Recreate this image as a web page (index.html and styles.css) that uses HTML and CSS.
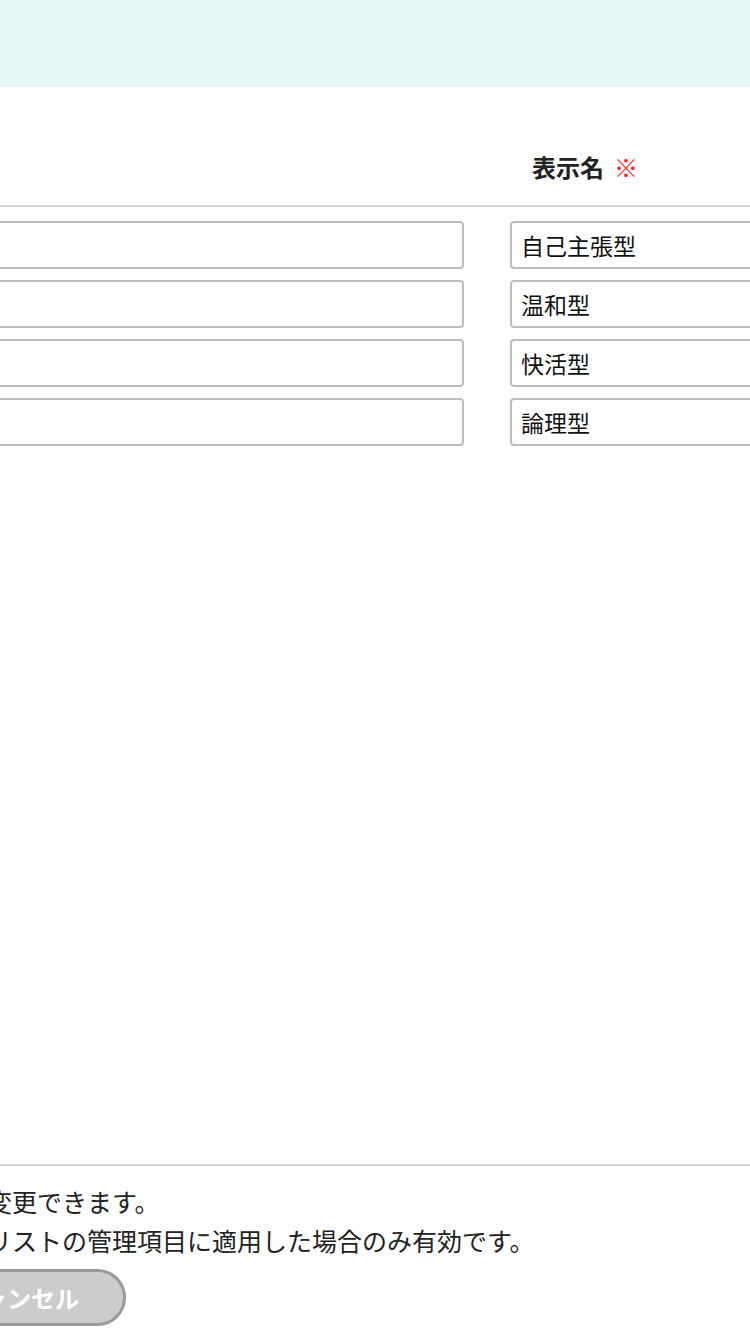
FILE: index.html
```html
<html>
  <head>
    <link rel="stylesheet" href="styles.css">
  </head>
  <body>
    <div class="page">
      <div class="band"></div>

      <div class="table">
        <div class="thead">
          <div class="th"></div>
          <div class="th th_name">表示名<span class="req">※</span></div>
        </div>
        <div class="tbody">
          <div class="tr">
            <input type="text" class="field" />
            <input type="text" class="field" value="自己主張型" />
          </div>
          <div class="tr">
            <input type="text" class="field" />
            <input type="text" class="field" value="温和型" />
          </div>
          <div class="tr">
            <input type="text" class="field" />
            <input type="text" class="field" value="快活型" />
          </div>
          <div class="tr">
            <input type="text" class="field" />
            <input type="text" class="field" value="論理型" />
          </div>
        </div>
      </div>

      <div class="foot">
        <p class="note">変更できます。</p>
        <p class="note">リストの管理項目に適用した場合のみ有効です。</p>
        <button type="button" class="btn_cancel">キャンセル</button>
      </div>
    </div>
  </body>
</html>
```

FILE: styles.css
```css
body {
  margin: 0;
  background-color: #ffffff;
  font-family: "Noto Sans CJK JP", "Noto Sans", sans-serif;
  color: #222222;
}
.page {
  width: 750px;
  height: 1335px;
  overflow: hidden;
}
.band {
  height: 87px;
  background-color: #e5f6f6;
}
.table {
  margin-left: -200px;
  width: 1010px;
}
.thead {
  display: grid;
  grid-template-columns: 664px 300px;
  column-gap: 46px;
  padding-top: 63px;
  padding-bottom: 21px;
  border-bottom: 2px solid #d6d6d6;
}
.th {
  font-size: 24px;
  font-weight: bold;
  line-height: 34px;
  height: 34px;
}
.th_name {
  padding-left: 22px;
}
.req {
  color: #ff1a1a;
  font-weight: normal;
  margin-left: 10px;
}
.tbody {
  box-sizing: border-box;
  height: 959px;
  padding-top: 14px;
  border-bottom: 2px solid #d6d6d6;
}
.tr {
  display: grid;
  grid-template-columns: 664px 300px;
  column-gap: 46px;
  margin-bottom: 11px;
}
.field {
  box-sizing: border-box;
  height: 48px;
  border: 2px solid #bdbdbd;
  border-radius: 4px;
  padding: 0 9px;
  font-family: "Noto Sans CJK JP", sans-serif;
  font-size: 23px;
  color: #111111;
  background-color: #ffffff;
}
.foot {
  padding-top: 16px;
  margin-left: -13px;
}
.note {
  margin: 0;
  font-size: 25px;
  line-height: 39px;
  color: #222222;
}
.btn_cancel {
  margin-top: 9px;
  margin-left: -75px;
  height: 57px;
  width: 214px;
  border: 3px solid #9a9a9a;
  border-radius: 30px;
  background-color: #cccccc;
  color: #ffffff;
  font-family: "Noto Sans CJK JP", sans-serif;
  font-size: 24px;
  font-weight: bold;
  padding: 0;
}
```
